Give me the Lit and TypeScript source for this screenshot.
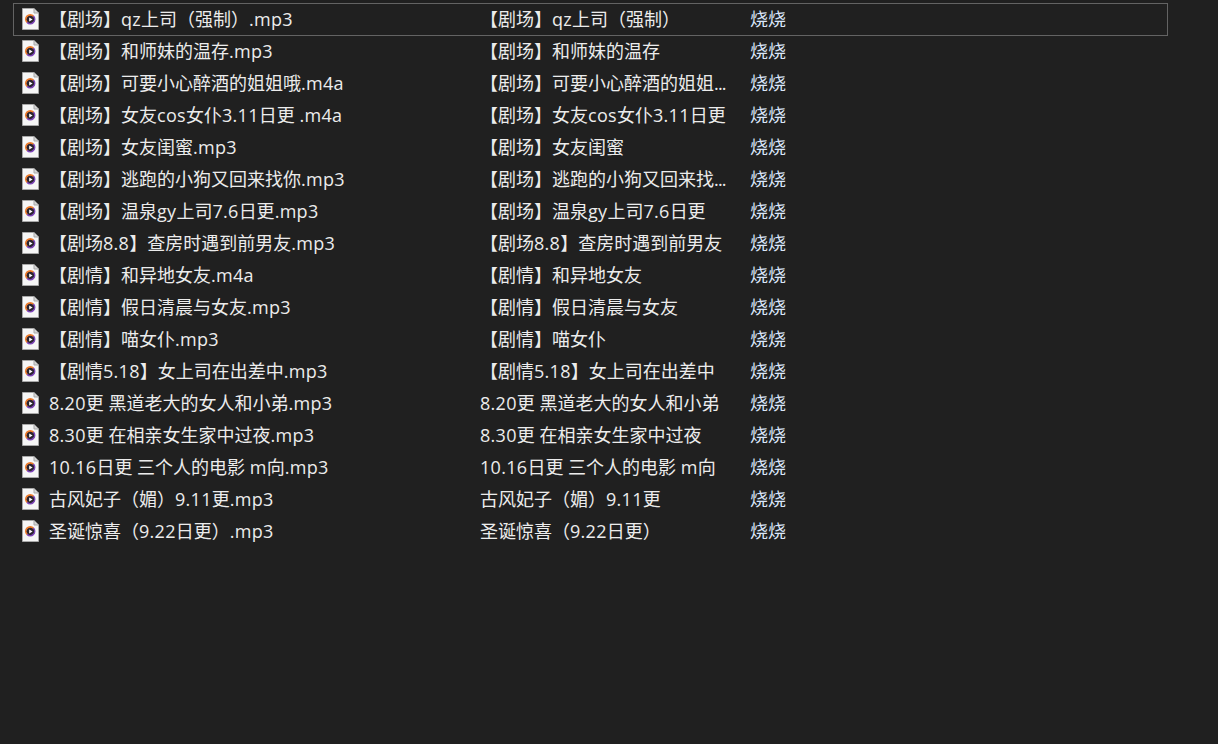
import { LitElement, html, css, svg } from "lit";
import { customElement } from "lit/decorators.js";

const rows: [string, string][] = [
  ["【剧场】qz上司（强制）.mp3", "【剧场】qz上司（强制）"],
  ["【剧场】和师妹的温存.mp3", "【剧场】和师妹的温存"],
  ["【剧场】可要小心醉酒的姐姐哦.m4a", "【剧场】可要小心醉酒的姐姐..."],
  ["【剧场】女友cos女仆3.11日更 .m4a", "【剧场】女友cos女仆3.11日更"],
  ["【剧场】女友闺蜜.mp3", "【剧场】女友闺蜜"],
  ["【剧场】逃跑的小狗又回来找你.mp3", "【剧场】逃跑的小狗又回来找..."],
  ["【剧场】温泉gy上司7.6日更.mp3", "【剧场】温泉gy上司7.6日更"],
  ["【剧场8.8】查房时遇到前男友.mp3", "【剧场8.8】查房时遇到前男友"],
  ["【剧情】和异地女友.m4a", "【剧情】和异地女友"],
  ["【剧情】假日清晨与女友.mp3", "【剧情】假日清晨与女友"],
  ["【剧情】喵女仆.mp3", "【剧情】喵女仆"],
  ["【剧情5.18】女上司在出差中.mp3", "【剧情5.18】女上司在出差中"],
  ["8.20更 黑道老大的女人和小弟.mp3", "8.20更 黑道老大的女人和小弟"],
  ["8.30更 在相亲女生家中过夜.mp3", "8.30更 在相亲女生家中过夜"],
  ["10.16日更 三个人的电影 m向.mp3", "10.16日更 三个人的电影 m向"],
  ["古风妃子（媚）9.11更.mp3", "古风妃子（媚）9.11更"],
  ["圣诞惊喜（9.22日更）.mp3", "圣诞惊喜（9.22日更）"],
];

const icon = svg`<svg class="icon" viewBox="0 0 18 24" width="18" height="24" aria-hidden="true">
  <path d="M0.5 1.5h11.5L16.5 6v16.5H0.5z" fill="#f6f6f6" stroke="#a8a8a8" stroke-width="1"/>
  <path d="M12 1.5V6h4.5" fill="#d6d6d6" stroke="#a8a8a8" stroke-width="1"/>
  <circle cx="8.5" cy="12.5" r="4.4" fill="#2b2530"/>
  <path d="M5.1 15.4A4.4 4.4 0 0 1 11.4 9.1" fill="none" stroke="#ec7a2a" stroke-width="1.7"/>
  <path d="M11.4 9.1A4.4 4.4 0 0 1 5.1 15.4" fill="none" stroke="#7d45b8" stroke-width="1.5"/>
  <path d="M7.2 10.4v4.2l3.4-2.1z" fill="#ffffff"/>
</svg>`;

/* Latin and digit runs set slightly wider than the CJK around them;
   a trailing "..." is set tighter */
const runs = (text: string) =>
  text
    .split(/(\.\.\.$|[\x21-\x7e]+)/)
    .map((part, i) =>
      i % 2
        ? html`<span class=${part === "..." ? "dots" : "latin"}>${part}</span>`
        : part
    );

@customElement("app-root")
export class AppRoot extends LitElement {
  static styles = css`
    :host {
      display: block;
      min-height: 744px;
      background: #202020;
      color: #ececec;
      font-family: "Open Sans", "Noto Sans CJK SC", sans-serif;
      font-size: 18px;
      overflow: hidden;
    }
    .list {
      padding: 3px 50px 0 13px;
      display: flex;
      flex-direction: column;
    }
    .row {
      height: 32px;
      display: flex;
      align-items: center;
      padding: 0 0 2px 9px;
      box-sizing: border-box;
      white-space: nowrap;
    }
    .row.sel {
      height: 33px;
      margin-bottom: -1px;
      padding-bottom: 3px;
      outline: 1px solid #636363;
      outline-offset: -1px;
    }
    .icon {
      flex: none;
      width: 18px;
      height: 24px;
      margin: 2px 9px 0 0;
    }
    .name {
      flex: none;
      width: 431px;
    }
    .title {
      flex: none;
      width: 270px;
    }
    .latin {
      letter-spacing: 0.3px;
    }
    .dots {
      letter-spacing: -0.8px;
    }
    .artist {
      color: #dbe6fa;
    }
  `;

  render() {
    return html`<div class="list">
      ${rows.map(
        ([n, t], i) => html`<div class="row ${i === 0 ? "sel" : ""}">
          ${icon}
          <span class="name">${runs(n)}</span>
          <span class="title">${runs(t)}</span>
          <span class="artist">烧烧</span>
        </div>`
      )}
    </div>`;
  }
}
